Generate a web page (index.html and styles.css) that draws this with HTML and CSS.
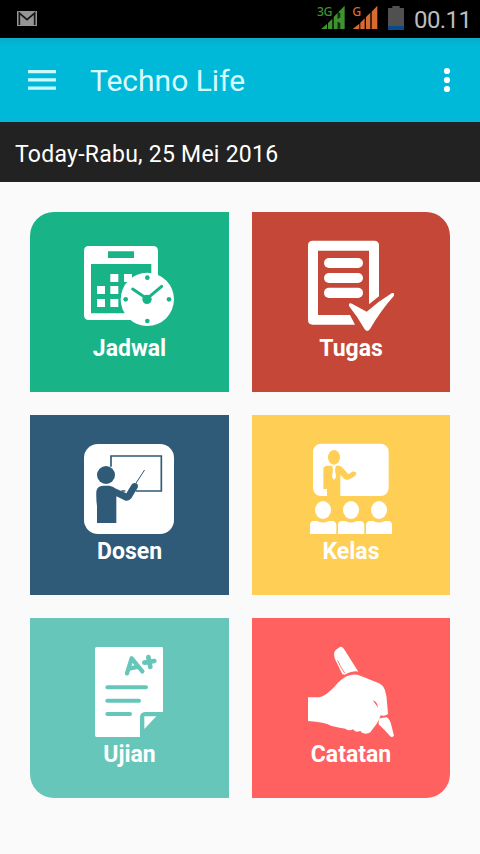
FILE: index.html
```html
<!DOCTYPE html>
<html lang="id">
<head>
<meta charset="utf-8">
<title>Techno Life</title>
<link rel="stylesheet" href="styles.css">
</head>
<body>
<div class="status">
  <svg class="mail" width="20" height="15" viewBox="0 0 60 45"><path fill="#959595" d="M0 0h60v45H0z"/><path fill="none" stroke="#161616" stroke-width="5" d="M7 42V6L30 26 53 6V42"/></svg>
  <div class="tray">
    <svg class="signal" width="66" height="38" viewBox="0 0 198 114">
      <g fill="#3f9230"><path d="M12 87 30 72V87zM33 87V69L46 56V87zM50 87V51L62 38V87zM65 87V35L83 17V87z"/></g>
      <path fill="#3f9230" d="M60 56h8v10h-8z"/>
      <path fill="#152d10" d="M65 39h5v14h-5zM65 68h5v18h-5z"/>
      <text class="net net-3g" x="0" y="47">3G</text>
      <g fill="#d66a30"><path d="M107 87 127 71V87zM130 87V68L143 55V87zM147 87V51L160 38V87zM164 87V35L181 17V87z"/></g>
      <text class="net net-g" x="106" y="47">G</text>
    </svg>
    <svg class="battery" width="16" height="24" viewBox="0 0 48 72"><path fill="#505050" d="M0 6h13V0h22v6h13v66H0z"/><path fill="#074b8c" d="M0 60h48v12H0z"/></svg>
    <span class="clock">00.11</span>
  </div>
</div>
<header class="appbar">
  <svg class="menu" width="28" height="20" viewBox="0 0 28 20"><path fill="#c9fbff" d="M0 0h28v3.3H0zM0 8.2h28v3.3H0zM0 16.4h28v3.3H0z"/></svg>
  <h1 class="title">Techno Life</h1>
  <svg class="more" width="8" height="26" viewBox="0 0 8 26"><g fill="#fff"><circle cx="4" cy="4" r="3.1"/><circle cx="4" cy="13" r="3.1"/><circle cx="4" cy="22" r="3.1"/></g></svg>
</header>
<div class="date">Today-Rabu, 25 Mei 2016</div>
<main class="grid">
  <a class="tile jadwal">
    <svg class="icon" viewBox="0 0 330 300">
      <path fill="#fff" fill-rule="evenodd" d="M42 33H234Q249 33 249 48V255H42Q27 255 27 240V48Q27 33 42 33zM99 49V69H177V49zM48 87V235H229V87z"/>
      <path fill="#fff" d="M106 117h24v24h-24zM147 117h24v24h-24zM66 153h24v24H66zM106 153h24v24h-24zM66 192h24v24H66zM106 192h24v24h-24z"/>
      <path fill="#19b388" d="M230 235h25v25h-25z"/>
      <circle cx="217" cy="193" r="80" fill="#fff"/>
      <g fill="#19b388"><circle cx="217" cy="128" r="7"/><circle cx="217" cy="258" r="7"/><circle cx="152" cy="193" r="7"/><circle cx="282" cy="193" r="7"/><circle cx="216" cy="193" r="14"/></g>
      <path fill="none" stroke="#19b388" stroke-width="9" stroke-linecap="round" d="M173 162 216 191 260 154"/>
    </svg>
    <span class="label">Jadwal</span>
  </a>
  <a class="tile tugas">
    <svg class="icon" viewBox="3 0 330 300">
      <path fill="#fff" fill-rule="evenodd" d="M53 17H238Q252 17 252 31V184L222 208V47H69V240H165L180 269H53Q39 269 39 255V31Q39 17 53 17z"/>
      <g fill="#fff"><rect x="87" y="69" width="117" height="30" rx="15"/><rect x="87" y="114" width="117" height="30" rx="15"/><rect x="87" y="158" width="117" height="31" rx="15"/></g>
      <path fill="#fff" d="M162 207Q164 203 171 206L215 230Q250 199 291 174Q299 172 297 182Q256 228 225 282Q217 293 209 283Q187 244 162 213z"/>
    </svg>
    <span class="label">Tugas</span>
  </a>
  <a class="tile dosen">
    <svg class="icon" viewBox="0 0 330 300">
      <rect x="27" y="18" width="270" height="270" rx="42" fill="#fff"/>
      <path fill="none" stroke="#2f5a78" stroke-width="5" d="M108 86V54H259V159H182M151 159H139"/>
      <circle cx="93" cy="111" r="27" fill="#2f5a78"/>
      <path fill="#2f5a78" d="M66 255V204Q63 185 64 160Q67 144 84 143H103Q113 144 123 152L154 166 169 141Q174 132 184 136Q191 139 188 149L169 181Q162 190 152 188L124 175V255z"/>
      <path fill="none" stroke="#2f5a78" stroke-width="3" stroke-linecap="round" d="M184 134 208 97"/>
    </svg>
    <span class="label">Dosen</span>
  </a>
  <a class="tile kelas">
    <svg class="icon" viewBox="3 0 330 300">
      <rect x="54" y="17" width="227" height="157" rx="24" fill="#fff"/>
      <g fill="#ffce54"><ellipse cx="117" cy="58" rx="18" ry="22"/><path d="M85 153V92Q86 84 97 83H134Q141 85 146 93L160 109 172 101Q181 99 184 105 184 111 177 116L160 125Q152 127 146 121L136 110V176H96V153z"/></g>
      <path fill="#fff" d="M111 83h12l-3 10 3 24-6 9-6-9 3-24z"/>
      <g fill="#fff"><ellipse cx="84" cy="216" rx="24" ry="27"/><ellipse cx="168" cy="216" rx="24" ry="27"/><ellipse cx="252" cy="216" rx="24" ry="27"/><path d="M45 288V260Q46 250 56 249H67Q84 258 101 249H112Q122 250 124 260V288zM129 288V260Q130 250 140 249H151Q168 258 185 249H196Q206 250 208 260V288zM213 288V260Q214 250 224 249H235Q252 258 269 249H280Q290 250 291 260V288z"/></g>
    </svg>
    <span class="label">Kelas</span>
  </a>
  <a class="tile ujian">
    <svg class="icon" viewBox="0 3 330 300">
      <path fill="#fff" d="M65 21H260Q264 21 264 25V216H210Q195 217 195 232V291H65Q60 291 60 286V26Q60 21 65 21zM208 229H244L208 267z"/>
      <g fill="none" stroke="#66c6ba" stroke-linecap="round"><path stroke-width="12" d="M97 142H213M97 182H192M97 222H165"/><path stroke-width="13" stroke-linejoin="round" d="M156 100 170 55 202 94M163 86 190 80"/><path stroke-width="14" d="M208 68 238 63M220 51 226 81"/></g>
    </svg>
    <span class="label">Ujian</span>
  </a>
  <a class="tile catatan">
    <svg class="icon" viewBox="3 3 330 300">
      <path fill="#fff" d="M117 44Q117 34 123 29L136 20Q143 19 149 30L190 95Q177 91 149 104L142 103 119 55z"/>
      <path fill="none" stroke="#ff6060" stroke-width="2.5" d="M128 61Q136 81 149 99"/>
      <path fill="#fff" d="M39 172H73Q94 167 121 137Q138 117 156 108Q178 99 196 107L252 130Q265 136 270 151Q276 170 277 197L279 222Q271 229 257 226Q253 239 245 251L226 277Q216 284 205 280 199 279 196 272 182 280 174 268 161 275 151 266 130 263 108 257 90 246 39 243z"/>
      <path fill="#fff" d="M251 237 258 234 275 232Q285 238 289 256L297 287Q291 294 285 288 270 271 251 253z"/>
      <path fill="#ff6060" d="M233 181Q244 184 247 193L249 203Q242 193 233 181z"/>
    </svg>
    <span class="label">Catatan</span>
  </a>
</main>
</body>
</html>
```
FILE: styles.css
```css
* { box-sizing: border-box; }
body {
  margin: 0;
  min-height: 854px;
  background: #fafafa;
  font-family: Roboto, "Liberation Sans", sans-serif;
}
svg { display: block; flex: none; }
.status {
  height: 38px;
  display: flex;
  justify-content: space-between;
  background: #000;
  padding: 0 10px 0 17px;
}
.mail { margin-top: 11px; }
.tray { display: flex; }
.net { font-family: "Noto Sans", sans-serif; font-size: 37px; font-weight: 500; letter-spacing: -1.5px; }
.net-3g { fill: #3f9230; }
.net-g { fill: #d66a30; }
.battery { margin: 6px 10px 0 5px; }
.clock {
  color: #bcbcbc;
  font-size: 24px;
  letter-spacing: -0.6px;
  line-height: 40px;
  width: 56px;
  white-space: nowrap;
}
.appbar {
  height: 84px;
  display: flex;
  align-items: center;
  padding: 0 29px 0 28px;
  background: linear-gradient(#09abc8, #00b8d8 7px);
}
.title {
  margin: 1px auto 0 34px;
  color: #d9fcff;
  font-size: 30px;
  font-weight: 400;
  line-height: 36px;
}
.date {
  height: 60px;
  padding: 3px 15px 0;
  background: #222;
  color: #fff;
  font-size: 23px;
  letter-spacing: 0.25px;
  line-height: 60px;
}
.grid {
  display: grid;
  grid-template-columns: 199px 198px;
  grid-auto-rows: 180px;
  gap: 23px;
  padding: 30px;
}
.tile {
  display: flex;
  flex-direction: column;
  align-items: center;
  padding-top: 23px;
  color: #fff;
}
.icon { width: 110px; height: 100px; }
.label {
  font-size: 23px;
  font-weight: 700;
  line-height: 27px;
}
.jadwal { background: #19b388; border-top-left-radius: 24px; }
.tugas { background: #c44737; border-top-right-radius: 24px; }
.dosen { background: #2f5a78; }
.kelas { background: #ffce54; }
.ujian { background: #66c6ba; border-bottom-left-radius: 24px; }
.catatan { background: #ff6060; border-bottom-right-radius: 24px; }
```
